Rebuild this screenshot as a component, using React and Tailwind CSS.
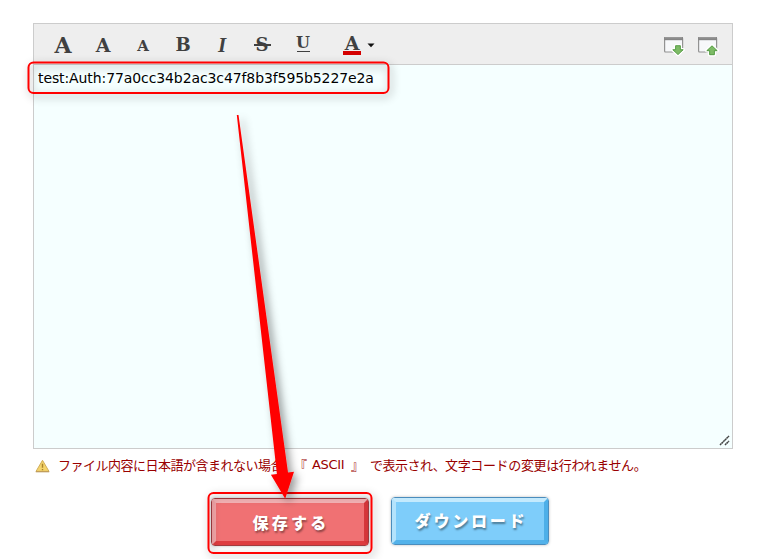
function ToolButton({ children, className = '' }) {
  return (
    <button
      className={
        'flex h-10 w-10 items-center justify-center font-["DejaVu_Serif",serif] font-bold leading-none text-[#404040] ' +
        className
      }
    >
      {children}
    </button>
  );
}

function WindowIcon({ up }) {
  return (
    <svg width="22" height="21" viewBox="0 0 22 21" fill="none">
      <rect x="1.6" y="1.5" width="18" height="14.5" rx="1" fill="#f7f8fa" stroke="#929292" strokeWidth="1.2" />
      <path d="M1.2 1h18.8v3.2H1.2z" fill="#858585" />
      <path d="M2 1.8h17.2" stroke="#aaa" strokeWidth=".7" />
      <g transform={up ? 'rotate(180 15 14.2)' : undefined}>
        <path
          d="M12.6 9.7h4.8v4h2.8L15 18.6l-5.2-4.9h2.8z"
          fill="#fff"
          stroke="#fff"
          strokeWidth="3.4"
          strokeLinejoin="round"
        />
        <path d="M12.6 9.7h4.8v4h2.8L15 18.6l-5.2-4.9h2.8z" fill="#7dbb66" stroke="#4c963b" strokeWidth=".9" />
      </g>
    </svg>
  );
}

function Toolbar() {
  return (
    <div className="flex h-[41px] items-center border-b border-[#ccc] bg-[#eee] pl-[9px] pr-[13px]">
      <ToolButton className="pt-[2px] text-[22px]">A</ToolButton>
      <ToolButton className="pt-[2px] text-[19px]">A</ToolButton>
      <ToolButton className="pt-1 text-[15px]">A</ToolButton>
      <ToolButton className="pt-[2px] text-[18px]">B</ToolButton>
      <ToolButton className='pr-[2px] pt-[2px] font-["Liberation_Serif",serif] text-[21px] italic'>I</ToolButton>
      <ToolButton className="pt-[2px] text-[18px]">
        <span className="flex items-center">
          S
          <span className="-ml-[15px] h-[1.5px] w-[17px] bg-[#404040]" />
        </span>
      </ToolButton>
      <ToolButton className="text-[16px]">
        <span className="flex h-[16px] w-[13px] justify-center border-b border-[#404040] leading-[13px]">U</span>
      </ToolButton>
      <button className="ml-5 flex h-10 w-[34px] items-center pt-[3px]">
        <span className='flex h-[18px] w-[18px] shrink-0 justify-center border-b-4 border-[#d40000] font-["DejaVu_Serif",serif] text-[19px] font-bold leading-[13px] text-[#404040]'>
          A
        </span>
        <svg className="ml-[6px] shrink-0" width="8" height="5" viewBox="0 0 8 5">
          <path d="M.5.5h7L4 4.3z" fill="#111" />
        </svg>
      </button>
      <div className="ml-auto flex gap-3 pt-[5px]">
        <WindowIcon />
        <WindowIcon up />
      </div>
    </div>
  );
}

function BevelButton({ tone, children }) {
  const red = tone === 'red';
  return (
    <button
      className={
        'flex h-[48px] w-[158px] rounded-[4px] border shadow-[0_0_3px_#0004] ' +
        (red ? 'border-[#a33b3f]' : 'border-[#4b8dbd]')
      }
    >
      <span
        className={
          'flex h-full w-full items-center justify-center rounded-[2px] border-4 font-["Noto_Sans_CJK_JP",sans-serif] text-[16px] font-black leading-none text-white [text-shadow:1px_2px_2px_#0006] ' +
          (red
            ? 'border-b-[#de3c40] border-l-[#f3a5a8] border-r-[#d8373b] border-t-[#f6b3b5] bg-[#f07173] pb-px pl-[2px] tracking-[3.2px]'
            : 'border-b-[#53b2ea] border-l-[#b4e3fc] border-r-[#4dafe8] border-t-[#c4eafd] bg-[#7ecdfa] pb-[3px] pl-[2px] tracking-[2.8px]')
        }
      >
        {children}
      </span>
    </button>
  );
}

function Notice() {
  return (
    <p className='ml-[35px] mt-[6px] flex h-5 items-center whitespace-nowrap font-["Noto_Sans_CJK_JP",sans-serif] text-[13px] font-normal leading-5 text-[#990000]'>
      <svg width="15" height="14" viewBox="0 0 15 14" className="mr-[8px] mt-[2px] shrink-0">
        <path d="M7.5 1.3 14 12.4H1z" fill="#f4d46c" stroke="#d1ad58" strokeLinejoin="round" />
        <path d="M.8 12.8h13.4" stroke="#b99658" />
        <path d="M7.5 4.8v4M7.5 10v1.3" stroke="#a8842c" strokeWidth="1.4" />
      </svg>
      <span className="w-[239px] tracking-[-0.5px]">ファイル内容に日本語が含まれない場合、</span>
      <span className="w-[12px] -indent-[3px]">『</span>
      <span className='ml-[3px] w-[39px] font-["DejaVu_Sans",sans-serif] text-[13px] tracking-[-0.3px]'>ASCII</span>
      <span className="w-[19px]">』</span>
      <span className="w-[75px] tracking-[-0.5px]">で表示され、</span>
      <span className="tracking-[-0.35px]">文字コードの変更は行われません。</span>
    </p>
  );
}

function Annotations() {
  return (
    <svg className="pointer-events-none absolute left-0 top-0" width="772" height="559" viewBox="0 0 772 559" fill="none">
      <defs>
        <filter id="shade" x="-20%" y="-20%" width="150%" height="150%">
          <feDropShadow dx="4" dy="4" stdDeviation="4" floodColor="#000" floodOpacity=".4" />
        </filter>
        <filter id="glow" x="-20%" y="-40%" width="140%" height="190%">
          <feDropShadow dx="2" dy="3" stdDeviation="4" floodColor="#000" floodOpacity=".4" />
        </filter>
      </defs>
      <g stroke="#f00" strokeWidth="2" filter="url(#glow)">
        <rect x="28.5" y="62.5" width="360" height="30.5" rx="5" />
        <rect x="208.5" y="493" width="163" height="60" rx="5" />
      </g>
      <path d="M236.8 115h1.7L288 472.5l6-.7-8.8 27-14.3-24 6-.8z" fill="#f00" filter="url(#shade)" />
    </svg>
  );
}

export default function App() {
  return (
    <div className="relative h-[559px] w-[772px] overflow-hidden bg-white pt-[23px]">
      <div className="ml-[33px] flex h-[426px] w-[700px] flex-col border border-[#ccc] bg-[#f5ffff]">
        <Toolbar />
        <div className='flex flex-1 flex-col justify-between font-["DejaVu_Sans",sans-serif] text-[14px] text-black'>
          <span className="pl-1 pt-[3px] leading-5 tracking-[-0.1px]">test:Auth:77a0cc34b2ac3c47f8b3f595b5227e2a</span>
          <svg className="mb-[2px] mr-[2px] self-end" width="11" height="11" viewBox="0 0 11 11">
            <path d="M1 10 10 1M6 10l4-4" stroke="#444" strokeWidth="1.5" strokeDasharray="2 .3" />
          </svg>
        </div>
      </div>
      <Notice />
      <div className="ml-[211px] mt-[22px] flex items-start gap-[22px]">
        <div className="pt-px">
          <BevelButton tone="red">保存する</BevelButton>
        </div>
        <BevelButton tone="blue">ダウンロード</BevelButton>
      </div>
      <Annotations />
    </div>
  );
}
